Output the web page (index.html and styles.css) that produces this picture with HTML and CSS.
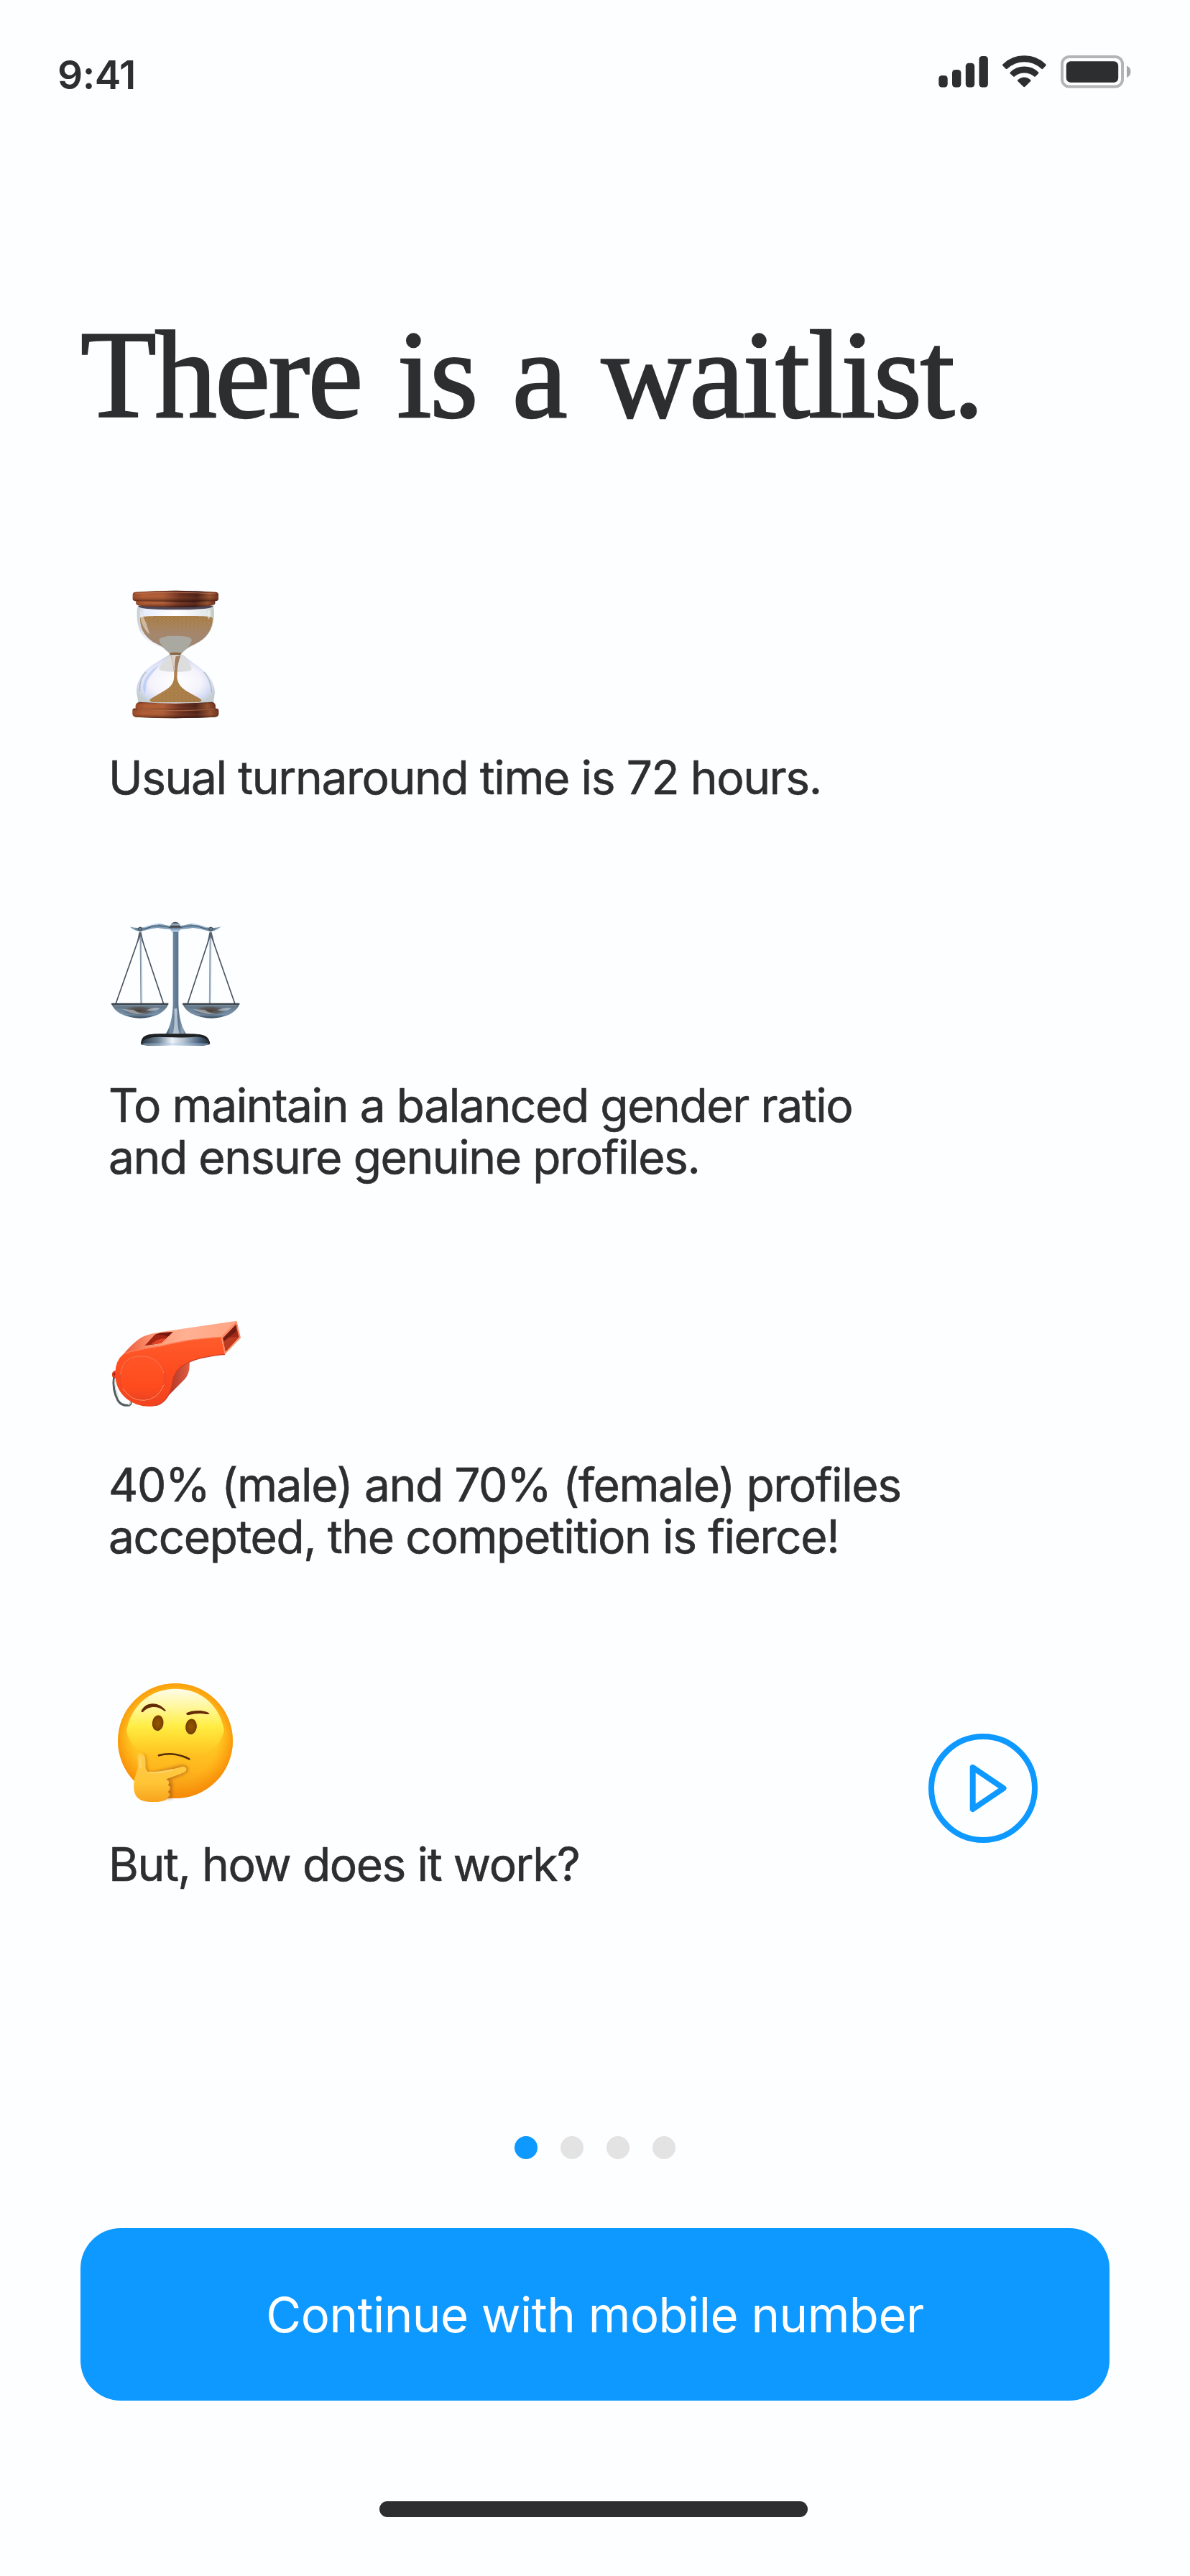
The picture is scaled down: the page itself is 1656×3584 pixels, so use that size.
FILE: index.html
```html
<!DOCTYPE html>
<html lang="en">
<head>
<meta charset="utf-8">
<title>Waitlist</title>
<link rel="stylesheet" href="styles.css">
</head>
<body>
<div class="screen">
  <header class="status">
    <span class="time">9:41</span>
    <svg class="status-icons" viewBox="0 0 270 48" aria-hidden="true">
      <g fill="#2d2e30">
        <rect x="0.3" y="29" width="12.4" height="16.6" rx="4.5"/>
        <rect x="19" y="21" width="12.4" height="24.6" rx="4.5"/>
        <rect x="37.8" y="11.8" width="12.4" height="33.8" rx="4.5"/>
        <rect x="56.5" y="2" width="12.4" height="43.6" rx="4.5"/>
        <path d="M89.300 13.500Q88.500 14.500 89.500 15.500L93.700 19.700Q94.600 20.600 95.600 19.700Q106.500 10.300 119.300 10.300Q132.500 10.300 143.300 19.700Q144.300 20.600 145.200 19.700L149.300 15.500Q150.300 14.500 149.400 13.500Q137.500 1.300 119.300 1.300Q101.500 1.300 89.300 13.500Z"/>
        <path d="M99.800 24.500Q98.900 25.500 99.900 26.500L104.200 30.500Q105.100 31.200 106.100 30.300Q111.500 25.600 119.300 25.600Q127.500 25.600 132.900 30.300Q133.900 31.200 134.800 30.500L138.900 26.500Q140 25.500 139.100 24.500Q131.500 16.400 119.300 16.400Q107.500 16.400 99.800 24.500Z"/>
        <path d="M110.300 35.200Q109.400 36.100 110.300 37L118.300 44.800Q119.300 45.600 120.300 44.800L128.200 37Q129.100 36.100 128.200 35.200Q124.500 31.400 119.300 31.400Q114 31.400 110.300 35.200Z"/>
        <rect x="177.800" y="9.300" width="72.400" height="29.400" rx="6"/>
      </g>
      <rect x="172" y="3" width="84" height="41.600" rx="10" fill="none" stroke="#b4b5b7" stroke-width="4"/>
      <path d="M262 15.500Q267.500 18 267.500 23.800T262 32Z" fill="#a6a7a9"/>
    </svg>
  </header>

  <main>
    <h1 class="title">There is a waitlist.</h1>
    <ul class="facts">
      <li class="fact">
        <svg class="emoji" viewBox="39 72 540 540" aria-hidden="true">
          <defs>
            <linearGradient id="wood" x1="0" x2="1"><stop offset="0" stop-color="#8b3f20"/><stop offset=".12" stop-color="#a9552f"/><stop offset=".35" stop-color="#a55733"/><stop offset=".55" stop-color="#5b2418"/><stop offset=".75" stop-color="#34110e"/><stop offset=".9" stop-color="#88492a"/><stop offset="1" stop-color="#552015"/></linearGradient>
            <linearGradient id="woodShade" x1="0" x2="0" y1="0" y2="1"><stop offset="0" stop-color="#301010" stop-opacity=".5"/><stop offset=".4" stop-color="#ff9a63" stop-opacity=".1"/><stop offset="1" stop-color="#250907" stop-opacity=".65"/></linearGradient>
            <linearGradient id="sand" x1="0" x2="0" y1="0" y2="1"><stop offset="0" stop-color="#a87d45"/><stop offset=".45" stop-color="#a5866b"/><stop offset="1" stop-color="#9a8875"/></linearGradient>
            <linearGradient id="heap" x1="0" x2="1" y1="0" y2="1"><stop offset="0" stop-color="#8c6339"/><stop offset=".5" stop-color="#ac8048"/><stop offset="1" stop-color="#a67b49"/></linearGradient>
            <radialGradient id="bulb" cx=".5" cy=".55" r=".55"><stop offset="0" stop-color="#ffffff"/><stop offset=".6" stop-color="#f4f3fb"/><stop offset=".85" stop-color="#d5dcf4"/><stop offset="1" stop-color="#c4cdd0"/></radialGradient>
            <linearGradient id="topGlass" x1="0" x2="1"><stop offset="0" stop-color="#c4cbd0"/><stop offset=".1" stop-color="#e7edfb"/><stop offset=".5" stop-color="#ffffff"/><stop offset=".9" stop-color="#e4e9ec"/><stop offset="1" stop-color="#bcc6b8"/></linearGradient>
            <pattern id="grain" width="17" height="13" patternUnits="userSpaceOnUse"><path d="M2 3h3M10 7h3M6 11h2" stroke="#d3a968" stroke-width="2"/><path d="M7 4h2M14 11h2M1 8h2" stroke="#765027" stroke-width="2"/></pattern>
          </defs>
          <path d="M153 135C147 225 170 262 225 290Q270 310 287 333L343 333Q355 312 400 288C455 258 479 215 472 135Z" fill="url(#topGlass)"/>
          <path d="M155 128H472Q470 145 312 145T155 128Z" fill="#4d4656"/>
          <path d="M165 180C170 170 215 171 312 171S462 170 468 180C468 225 445 265 395 288Q350 308 338 328H292Q275 307 235 288C190 266 164 230 165 180Z" fill="url(#sand)"/>
          <path d="M165 180C170 170 215 171 312 171S462 170 468 180L455 215Q310 245 180 208Z" fill="url(#grain)" opacity=".65"/>
          <path d="M244 271Q249 254 312 254T381 271Q374 300 337 326Q312 334 287 326Q251 300 244 271Z" fill="#aaa9a1"/>
          <path d="M287 326Q312 321 338 326L330 342H294Z" fill="#8b623e"/>
          <path d="M287 333C235 365 149 400 150 490L158 535H471L477 490C475 410 394 378 343 333Z" fill="url(#bulb)"/>
          <path d="M287 338Q235 385 247 397C270 407 362 407 379 397Q386 382 343 336Z" fill="#dedddd"/>
          <path d="M185 495C165 455 189 408 246 374C200 430 191 438 190 468Z" fill="#91b3f1" opacity=".45"/>
          <path d="M164 485Q160 433 190 404M464 490Q460 435 431 405" fill="none" stroke="#7f9987" stroke-width="4" opacity=".5"/>
          <path d="M292 335Q313 344 334 335C322 370 315 400 320 434Q326 465 360 485L415 516Q435 531 393 532H240Q195 532 209 517L270 481Q300 463 305 439C311 400 300 361 292 335Z" fill="url(#heap)"/>
          <path d="M293 336L314 340Q306 380 312 430Q303 365 293 336Z" fill="#dfd1ca"/>
          <path d="M315 340L333 336Q316 380 320 430Q312 385 315 340Z" fill="#9f7f65"/>
          <path d="M305 450Q330 480 410 517V532H220V514Q290 475 305 450Z" fill="url(#grain)" opacity=".7"/>
          <path d="M166 146Q161 210 205 248L190 200ZM455 142Q464 175 451 185Q438 164 455 142Z" fill="#fff" opacity=".45"/>
          <g id="cap">
            <path d="M147 96H478V120Q476 134 312 134T148 121Z" fill="url(#wood)"/><path d="M147 96H478V120Q476 134 312 134T148 121Z" fill="url(#woodShade)"/>
            <path d="M134 82Q134 71 147 71Q312 60 478 71Q492 72 492 82V100Q490 110 478 109Q312 114 147 109Q134 108 134 100Z" fill="url(#wood)"/><path d="M134 82Q134 71 147 71Q312 60 478 71Q492 72 492 82V100Q490 110 478 109Q312 114 147 109Q134 108 134 100Z" fill="url(#woodShade)"/>
            <path d="M145 77Q310 68 480 78" fill="none" stroke="#ca8060" stroke-width="3" opacity=".65"/>
          </g>
          <path d="M146 545Q148 532 165 530Q312 542 465 530Q480 532 480 550V570H146Z" fill="url(#wood)"/>
          <path d="M146 545Q148 532 165 530Q312 542 465 530Q480 532 480 550V570H146Z" fill="url(#woodShade)"/>
          <path d="M133 564Q134 555 145 557Q312 568 482 557Q493 557 493 567V582Q490 592 478 593Q312 602 147 593Q134 591 133 580Z" fill="url(#wood)"/>
          <path d="M133 564Q134 555 145 557Q312 568 482 557Q493 557 493 567V582Q490 592 478 593Q312 602 147 593Q134 591 133 580Z" fill="url(#woodShade)"/>
          <path d="M152 560Q312 572 478 560" fill="none" stroke="#ba704a" stroke-width="4" opacity=".7"/>
        </svg>
        <p class="text">Usual turnaround time is 72 hours.</p>
      </li>

      <li class="fact">
        <svg class="emoji" viewBox="39 60 540 540" aria-hidden="true">
          <defs>
            <linearGradient id="post" x1="0" x2="1"><stop offset="0" stop-color="#333f4c"/><stop offset=".25" stop-color="#7890a9"/><stop offset=".6" stop-color="#58738f"/><stop offset=".8" stop-color="#93a7b9"/><stop offset="1" stop-color="#3e4a57"/></linearGradient>
            <linearGradient id="base" x1="0" x2="1"><stop offset="0" stop-color="#263340"/><stop offset=".25" stop-color="#6d8294"/><stop offset=".45" stop-color="#edf3fb"/><stop offset=".62" stop-color="#b3c1ce"/><stop offset=".85" stop-color="#48617c"/><stop offset="1" stop-color="#1f252a"/></linearGradient>
            <linearGradient id="pan" x1="0" x2="0" y1="0" y2="1"><stop offset="0" stop-color="#546675"/><stop offset=".45" stop-color="#71879b"/><stop offset=".75" stop-color="#7590aa"/><stop offset="1" stop-color="#2d4155"/></linearGradient>
            <radialGradient id="panDark"><stop offset="0" stop-color="#4a4037"/><stop offset=".6" stop-color="#554c47" stop-opacity=".7"/><stop offset="1" stop-color="#5c7185" stop-opacity="0"/></radialGradient>
            <linearGradient id="knob" x1="0" x2="0" y1="0" y2="1"><stop offset="0" stop-color="#2d363f"/><stop offset=".25" stop-color="#9fb1c0"/><stop offset=".45" stop-color="#343235"/><stop offset=".6" stop-color="#7b94ad"/><stop offset=".85" stop-color="#b6d4f0"/><stop offset="1" stop-color="#3e536a"/></linearGradient>
          </defs>
          <path id="arm" d="M122 88Q155 99 195 87Q230 70 260 78Q277 83 295 85V99Q262 98 238 93Q210 95 183 104Q150 115 122 88Z" fill="#7f9eb7"/>
          <path d="M502 88Q469 99 429 87Q394 70 364 78Q347 83 329 85V99Q362 98 386 93Q414 95 441 104Q474 115 502 88Z" fill="#7f9eb7"/>
          <path d="M145 97Q170 103 205 91Q235 76 292 92M479 97Q454 103 419 91Q389 76 332 92" fill="none" stroke="#364b5e" stroke-width="3"/>
          <path d="M180 91Q220 75 240 79M444 91Q404 75 384 79" fill="none" stroke="#d7e9f7" stroke-width="3"/>
          <g fill="none" stroke="#4a5661" stroke-width="5"><path d="M165 120L63 410M166 120L263 410M459 120L363 410M460 120L561 410"/></g>
          <path d="M167 110L170 408M459 110L456 408" stroke="#6d8497" stroke-width="7"/>
          <path d="M168 125L170 408M458 125L456 408" stroke="#bfd2e3" stroke-width="3"/>
          <path d="M160 112H170L180 155L167 128L151 158ZM454 112H464L475 155L460 128L445 158Z" fill="#56616c"/>
          <circle cx="165" cy="98" r="8" fill="#697986" stroke="#34404a" stroke-width="3"/><circle cx="460" cy="98" r="8" fill="#697986" stroke="#34404a" stroke-width="3"/>
          <path d="M302 108H325V410C327 468 340 512 362 542H268C290 510 300 470 302 410Z" fill="url(#post)"/>
          <path d="M307 430Q312 500 300 540H330Q319 500 320 430Z" fill="#d1d8e0" opacity=".75"/>
          <circle cx="312" cy="91" r="23" fill="url(#knob)"/>
          <path d="M168 577C174 538 195 536 260 535H365C430 537 449 540 457 577Q450 583 430 584H195Q170 583 168 577Z" fill="url(#base)"/>
          <path d="M168 575C174 538 195 536 260 535H365C430 537 449 540 457 575Q440 545 390 548Q350 552 265 549Q190 543 168 575Z" fill="#1f2022"/>
          <path d="M178 578H448" stroke="#a7c8ed" stroke-width="4"/>
          <g id="leftPan"><path d="M45 408H283Q279 431 244 453Q205 470 166 470Q122 470 82 451Q53 434 45 408Z" fill="url(#pan)"/><ellipse cx="160" cy="438" rx="75" ry="22" fill="url(#panDark)"/><path d="M90 432Q145 463 190 448Q159 453 138 435ZM190 436Q224 446 249 428Q229 421 190 436Z" fill="#cad5df" opacity=".55"/><path d="M45 410H283" stroke="#343b40" stroke-width="6"/><path d="M58 418H272" stroke="#92a6b6" stroke-width="3"/></g>
          <use href="#leftPan" x="297"/>
        </svg>
        <p class="text">To maintain a balanced gender ratio<br>and ensure genuine profiles.</p>
      </li>

      <li class="fact">
        <svg class="emoji" viewBox="39 -6 540 540" aria-hidden="true">
          <defs>
            <linearGradient id="body" x1="0" x2="0" y1="0" y2="1"><stop offset="0" stop-color="#ff5c2b"/><stop offset=".5" stop-color="#fe4b20"/><stop offset="1" stop-color="#f04420"/></linearGradient>
            <linearGradient id="topFace" x1="0" x2="1"><stop offset="0" stop-color="#ec5a38"/><stop offset=".3" stop-color="#ff9d7c"/><stop offset=".55" stop-color="#ffb193"/><stop offset="1" stop-color="#ffa482"/></linearGradient>
            <linearGradient id="side" x1="0" x2="1"><stop offset="0" stop-color="#b53321"/><stop offset=".6" stop-color="#ca4e39"/><stop offset="1" stop-color="#e25d3e"/></linearGradient>
            <linearGradient id="disc" x1="0" x2="0" y1="0" y2="1"><stop offset="0" stop-color="#ff5627"/><stop offset=".7" stop-color="#ff4b1d"/><stop offset="1" stop-color="#ec4323"/></linearGradient>
          </defs>
          <path d="M56 315Q48 370 72 415Q88 440 120 435Q129 427 127 418" fill="none" stroke="#525d5e" stroke-width="9"/>
          <path d="M60 325Q57 365 76 403M116 435Q126 427 125 421" fill="none" stroke="#d4dddb" stroke-width="4"/>
          <path d="M68 288L53 294Q44 303 50 318L65 323Z" fill="#dd3d20"/><circle cx="58" cy="305" r="5" fill="#9d2414"/>
          <path d="M300 290L371 255Q374 303 351 327L283 395Z" fill="url(#side)"/>
          <path d="M95 222Q145 164 180 148Q205 136 260 128L568 83L503 154Q360 165 230 198Q160 207 95 222Z" fill="url(#topFace)"/>
          <path d="M95 222Q150 205 250 190Q370 158 503 151L519 223Q420 232 371 255Q307 282 300 340Q288 418 232 437Q167 451 111 410Q60 370 61 301Q62 248 95 222Z" fill="url(#body)"/>
          <path d="M100 218Q160 202 250 188Q370 158 502 151" fill="none" stroke="#ff7d54" stroke-width="4"/>
          <path d="M519 223Q420 232 371 255Q307 282 300 340Q288 418 232 437" fill="none" stroke="#cd3b23" stroke-width="4"/>
          <path d="M503 151L568 83L585 154L519 223Z" fill="#ff8761"/>
          <path d="M511 155L565 99L577 151L522 211Z" fill="#9e2a17"/>
          <path d="M511 155L563 151L577 152L522 211Z" fill="#bc3b21"/><path d="M511 155L565 99L567 127L515 169Z" fill="#711c13"/>
          <path d="M519 219L581 153" stroke="#ffa17c" stroke-width="3"/>
          <path d="M182 189L224 143Q235 135 258 132L303 130L254 178Q233 184 182 189Z" fill="#a52514"/>
          <path d="M224 143Q238 134 303 130L285 149Q242 135 224 143Z" fill="#73170e"/>
          <path d="M211 181Q245 151 276 158L255 178Z" fill="#e54424"/><path d="M184 189L254 178L303 130" fill="none" stroke="#ffad8c" stroke-width="3"/>
          <ellipse cx="174" cy="322" rx="93" ry="94" fill="url(#disc)" stroke="#e34829" stroke-width="3"/>
          <path d="M83 307Q92 230 172 230Q240 230 264 301" fill="none" stroke="#ff8056" stroke-width="3"/><path d="M92 365Q128 418 182 415Q241 410 264 350" fill="none" stroke="#ff9168" stroke-width="3"/>
        </svg>
        <p class="text">40% (male) and 70% (female) profiles<br>accepted, the competition is fierce!</p>
      </li>

      <li class="fact">
        <div class="fact-row">
          <svg class="emoji" viewBox="39 48 540 540" aria-hidden="true">
            <defs>
              <linearGradient id="face" x1="0" x2="0" y1="0" y2="1"><stop offset="0" stop-color="#ffbf18"/><stop offset=".45" stop-color="#ffd026"/><stop offset=".75" stop-color="#ffb51d"/><stop offset="1" stop-color="#f29412"/></linearGradient>
              <radialGradient id="rim" cx=".5" cy=".48" r=".52"><stop offset=".7" stop-color="#ff9b0a" stop-opacity="0"/><stop offset="1" stop-color="#f58906" stop-opacity=".9"/></radialGradient>
              <linearGradient id="shine" x1="0" x2="0" y1="0" y2="1"><stop offset="0" stop-color="#fffce9"/><stop offset=".25" stop-color="#fff7a0"/><stop offset=".55" stop-color="#ffed43"/><stop offset="1" stop-color="#ffd32b" stop-opacity="0"/></linearGradient>
              <linearGradient id="hand" x1="0" x2="0" y1="0" y2="1"><stop offset="0" stop-color="#ffcd4c"/><stop offset=".6" stop-color="#ffc537"/><stop offset="1" stop-color="#f8a31c"/></linearGradient>
              <radialGradient id="eye"><stop offset="0" stop-color="#925600"/><stop offset=".7" stop-color="#814700"/><stop offset="1" stop-color="#643100"/></radialGradient>
              <filter id="soft" x="-20%" y="-20%" width="140%" height="140%"><feGaussianBlur stdDeviation="6"/></filter>
            </defs>
            <circle cx="312" cy="306" r="240" fill="url(#face)"/><circle cx="312" cy="306" r="240" fill="url(#rim)"/>
            <path d="M312 89C425 90 500 165 516 265C490 360 415 376 312 376S125 355 108 265C125 165 200 90 312 89Z" fill="url(#shine)"/>
            <path d="M169 183C185 145 237 137 272 179Q272 186 265 181C235 155 197 163 179 184Q173 190 169 183Z" fill="#642b06"/>
            <path d="M358 190Q380 178 418 180Q445 183 455 192Q452 197 437 194Q407 189 365 199Q357 198 358 190Z" fill="#642b06"/>
            <ellipse cx="239" cy="232" rx="25" ry="34" transform="rotate(6 239 232)" fill="url(#eye)" stroke="#ffe94a" stroke-width="3"/>
            <ellipse cx="378" cy="247" rx="25" ry="34" transform="rotate(6 378 247)" fill="url(#eye)" stroke="#ffe94a" stroke-width="3"/>
            <path d="M243 367Q305 349 370 382" fill="none" stroke="#552b0b" stroke-width="8" stroke-linecap="round"/>
            <path d="M180 358C200 378 182 420 204 437Q240 435 337 408Q366 406 364 430Q360 443 290 466L298 480V548L250 545L190 480Z" fill="#9a4a13" opacity=".6" filter="url(#soft)"/>
            <path d="M154 370C156 355 180 355 185 375C192 404 179 427 202 436C239 438 284 430 341 413C358 412 366 427 350 437C328 449 296 457 275 466C289 466 297 478 284 490C295 495 299 509 284 519C295 526 298 540 280 545C270 560 240 562 205 561C168 560 142 545 139 508C135 470 149 445 156 418Z" fill="url(#hand)"/>
            <path d="M275 466Q295 473 284 490Q300 502 284 519Q298 534 280 545" fill="none" stroke="#c97413" stroke-width="4"/>
            <path d="M204 438Q244 441 302 426M163 373Q171 392 165 420" fill="none" stroke="#ffda72" stroke-width="7" opacity=".7"/>
          </svg>
          <button class="play" aria-label="Play video">
            <svg viewBox="0 0 152 152"><circle cx="76" cy="76" r="72"/><path d="M61.700 47L104.500 76L61.700 105Z"/></svg>
          </button>
        </div>
        <p class="text">But, how does it work?</p>
      </li>
    </ul>
  </main>

  <footer class="footer">
    <div class="dots"><i class="dot active"></i><i class="dot"></i><i class="dot"></i><i class="dot"></i></div>
    <button class="continue">Continue with mobile number</button>
    <div class="home"></div>
  </footer>
</div>
</body>
</html>
```
FILE: styles.css
```css
* { box-sizing: border-box; margin: 0; padding: 0; }
body { background: #fdfeff; color: #2d2e30; font-family: Inter, "Liberation Sans", sans-serif; }
button { border: 0; background: none; font: inherit; }
svg { display: block; overflow: visible; }

.screen { width: 1656px; height: 3584px; display: flex; flex-direction: column; }

.status { height: 422px; padding: 74px 80px 0 80px; display: flex; justify-content: space-between; align-items: flex-start; }
.time { font-size: 55px; font-weight: 600; line-height: 60px; letter-spacing: -0.5px; }
.status-icons { width: 270px; height: 48px; margin-top: 2px; }

.title {
  margin-left: 112px;
  height: 402px;
  font: 400 173px/200px "Liberation Serif", serif;
  letter-spacing: -2.500px;
  word-spacing: 9px;
  -webkit-text-stroke: 2.500px #2d2e30;
}

.facts { list-style: none; padding: 0 212px 0 153px; display: flex; flex-direction: column; gap: 162px; }
.fact { display: flex; flex-direction: column; gap: 42px; }
.fact-row { display: flex; justify-content: space-between; height: 180px; }
.emoji { width: 180px; height: 180px; }
.text { font-size: 64px; line-height: 72px; letter-spacing: -1.400px; margin-left: -2px; white-space: nowrap; -webkit-text-stroke: 0.600px #2d2e30; }
.play { width: 152px; height: 152px; margin-top: 76px; }
.play svg { fill: none; stroke: #0d99ff; stroke-width: 8px; stroke-linejoin: round; }

.footer { margin-top: auto; height: 612px; display: flex; flex-direction: column; align-items: center; }
.dots { display: flex; gap: 32px; }
.dot { width: 32px; height: 32px; border-radius: 50%; background: #e3e3e3; }
.dot.active { background: #0d99ff; }
.continue { width: 1432px; height: 240px; margin-top: 96px; border-radius: 56px; background: #0d99ff; color: #fff; font-size: 67px; letter-spacing: -0.500px; }
.home { width: 596px; height: 22px; margin: 140px 4px 0 0; border-radius: 11px; background: #2d2e30; }
```
